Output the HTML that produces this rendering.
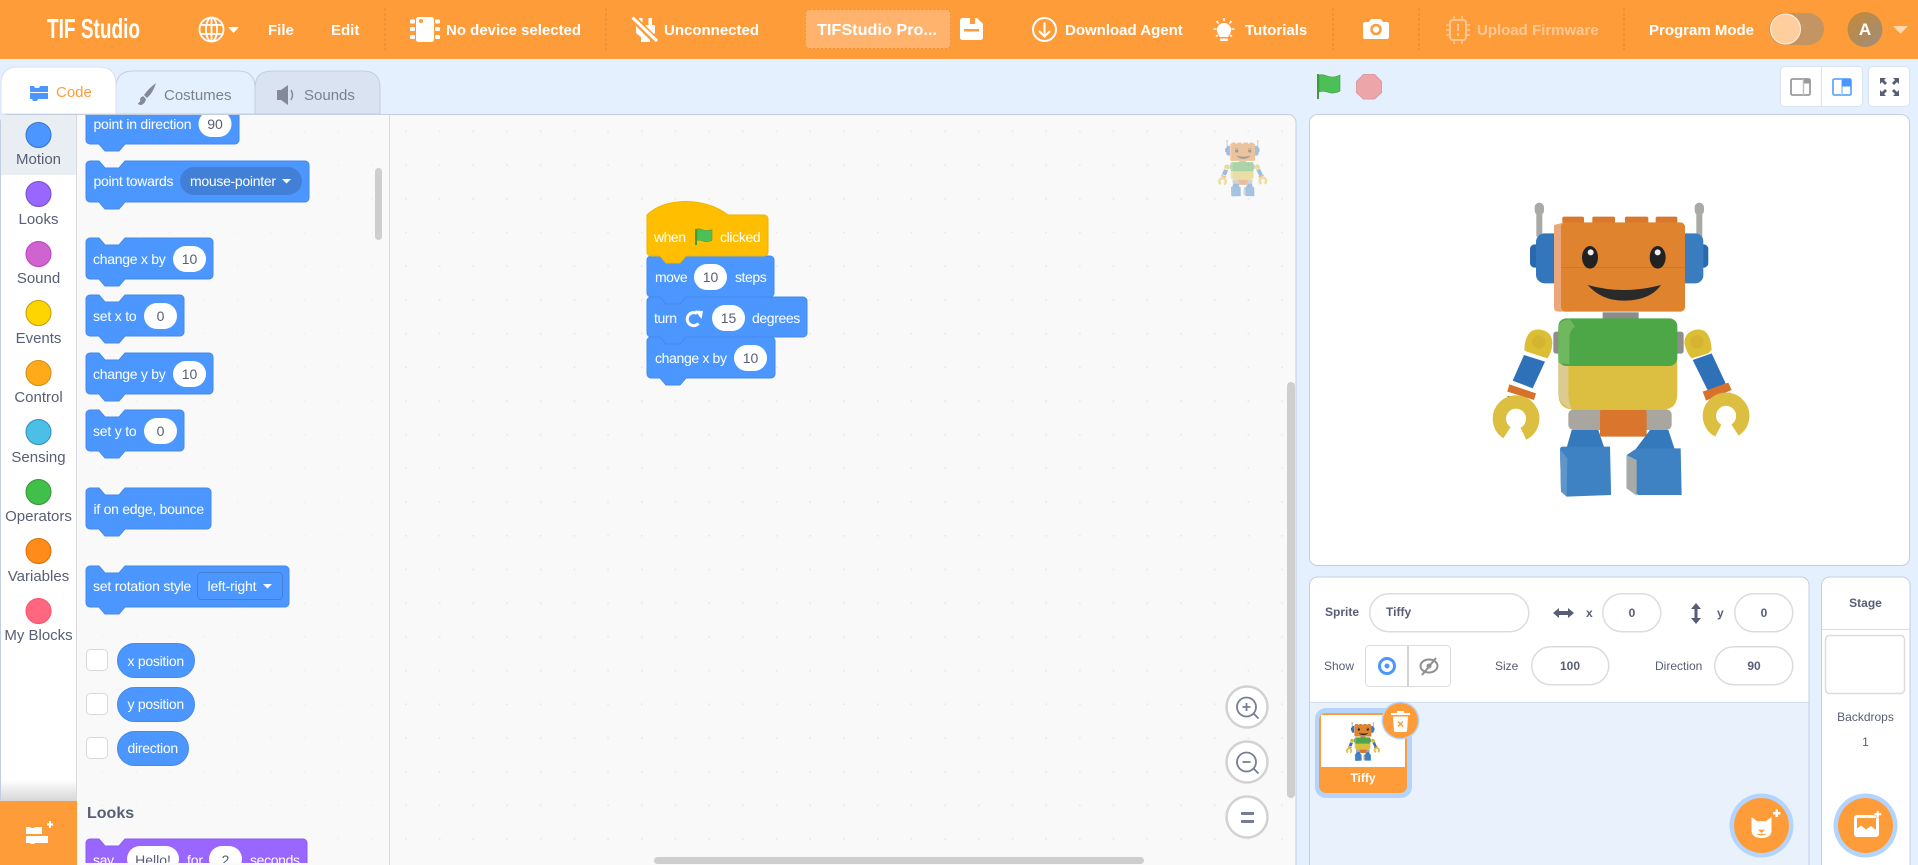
<!DOCTYPE html>
<html lang="en"><head><meta charset="utf-8"><title>TIF Studio</title>
<style>
html,body{margin:0;padding:0;width:1918px;height:865px;overflow:hidden;background:#e5f0ff}
svg{display:block;font-family:"Liberation Sans",Arial,sans-serif}
.h{font-size:15px;font-weight:700;fill:#fff}
.c{font-size:15px;fill:#575e75;text-anchor:middle}
.b{font-size:14px;fill:#fff}
.i{font-size:14px;fill:#575e75;text-anchor:middle}
.l{font-size:12px;fill:#575e75}
.lb{font-size:12px;fill:#575e75;font-weight:700}
.s{stroke:#4589ea;stroke-width:1;fill:#4c97ff}
.f{fill:none;stroke:#dcdcdc;stroke-width:1.5}
</style></head><body>
<svg width="1918" height="865" viewBox="0 0 1918 865" xmlns="http://www.w3.org/2000/svg">
<defs>
<pattern id="dots" patternUnits="userSpaceOnUse" x="641" y="198" width="33.7" height="33.7"><rect x="0" y="0" width="1.6" height="1.6" fill="#e6e6e6"/></pattern>
<clipPath id="fly"><rect x="77" y="115" width="312" height="748"/></clipPath>
<linearGradient id="fade" x1="0" y1="0" x2="0" y2="1"><stop offset="0" stop-color="#fff"/><stop offset="1" stop-color="#d6d6d6"/></linearGradient>
<linearGradient id="av" x1="0" y1="0" x2="1" y2="1"><stop offset="0" stop-color="#c58a35"/><stop offset="1" stop-color="#a08c7c"/></linearGradient>
<g id="robot">
<g fill="#a9a9a5"><rect x="229" y="90" width="18" height="80"/><rect x="709" y="90" width="18" height="80"/><rect x="224" y="68" width="28" height="38" rx="14"/><rect x="704" y="68" width="28" height="38" rx="14"/></g>
<rect x="210" y="193" width="40" height="70" rx="14" fill="#2a69ad"/>
<rect x="228" y="160" width="80" height="150" rx="26" fill="#3476bb"/>
<rect x="705" y="193" width="40" height="70" rx="14" fill="#2a69ad"/>
<rect x="650" y="160" width="80" height="150" rx="24" fill="#3a7cc0"/>
<g fill="#d9772c"><rect x="307" y="110" width="65" height="24" rx="5"/><rect x="397" y="110" width="68" height="24" rx="5"/><rect x="495" y="110" width="70" height="24" rx="5"/><rect x="587" y="110" width="65" height="24" rx="5"/></g>
<path d="M282,135 L310,128 H330 V395 H296 Q282,395 282,382Z" fill="#eaa77c"/>
<rect x="303" y="127" width="372" height="268" rx="14" fill="#e0832f"/>
<rect x="303" y="262" width="372" height="2" fill="#c97226"/>
<ellipse cx="390" cy="232" rx="24" ry="34" fill="#222"/><ellipse cx="593" cy="232" rx="24" ry="34" fill="#222"/>
<circle cx="392" cy="217" r="9" fill="#eee"/><circle cx="593" cy="217" r="9" fill="#eee"/>
<path d="M383,315 Q490,345 603,315 Q570,362 490,362 Q425,362 383,315Z" fill="#2a2a2a"/>
<rect x="428" y="397" width="108" height="30" fill="#8c8c8a"/>
<g fill="#8e8e8a"><rect x="280" y="455" width="38" height="66" rx="8"/><rect x="645" y="455" width="26" height="66" rx="8"/></g>
<rect x="325" y="688" width="310" height="62" rx="16" fill="#a8a69f"/>
<rect x="420" y="690" width="140" height="80" rx="6" fill="#d9752c"/>
<path d="M295,545 V640 Q295,688 340,688 H610 Q652,688 652,640 V545Z" fill="#dcbe40"/>
<path d="M295,550 V640 Q295,670 335,688 Q325,660 325,640 V550Z" fill="#dccb90"/>
<rect x="295" y="415" width="357" height="143" rx="24" fill="#4ea747"/>
<path d="M295,445 Q295,420 330,418 L345,440 Q328,452 328,475 V553 L295,548Z" fill="#6fb860"/>
<path d="M192,525 L255,545 L218,625 L158,602Z" fill="#2f71b8"/>
<path d="M755,520 L698,540 L745,635 L797,610Z" fill="#2f71b8"/>
<path d="M193,510 Q195,448 235,448 Q277,452 277,490 Q275,520 262,535 L200,515Z" fill="#dcbe35"/>
<path d="M755,510 Q752,448 715,448 Q673,452 673,490 Q680,520 695,535 L745,520Z" fill="#dcbe35"/>
<circle cx="236" cy="486" r="20" fill="#d4b430"/><circle cx="711" cy="486" r="20" fill="#d4b430"/>
<path d="M148,613 L228,640 L222,660 L142,635Z" fill="#d6722b"/><path d="M728,635 L805,608 L815,630 L738,662Z" fill="#d6722b"/>
<path d="M143,650 L210,672" stroke="#222" stroke-width="5"/><path d="M745,667 L810,640" stroke="#222" stroke-width="5"/>
<path d="M141,758 A50,50 0 1 1 190,761" fill="none" stroke="#dcbe40" stroke-width="40"/>
<path d="M775,752 A50,50 0 1 1 825,750" fill="none" stroke="#dcbe40" stroke-width="40"/>
<path d="M335,750 L415,750 L435,810 H318Z" fill="#3479bb"/><path d="M570,750 L625,750 L645,810 H525Z" fill="#3479bb"/>
<path d="M300,808 Q300,800 310,800 H450 L453,930 V945 L320,950 L303,935Z" fill="#3e82c4"/>
<path d="M300,808 L322,835 L320,950 L303,935Z" fill="#5f95c8"/>
<path d="M500,825 L530,805 H662 L665,945 H535 L500,925Z" fill="#3e82c4"/>
<path d="M500,825 L530,840 V947 L500,925Z" fill="#a9aaa8"/>
</g>
</defs>

<rect width="1918" height="865" fill="#e5f0ff"/>

<!-- header -->
<rect width="1918" height="59" fill="#ff9c3a"/>
<text x="47" y="38" font-size="28" font-weight="700" fill="#fff" textLength="93" lengthAdjust="spacingAndGlyphs">TIF Studio</text>
<g fill="none" stroke="#fff" stroke-width="1.8"><circle cx="211.5" cy="29.5" r="12"/><ellipse cx="211.5" cy="29.5" rx="5.5" ry="12"/><path d="M200,25H223M200,34H223M211.5,18V42"/></g>
<path d="M228,27h11l-5.5,6z" fill="#fff"/>
<text class="h" x="268" y="35">File</text>
<text class="h" x="331" y="35">Edit</text>
<g stroke="#d98936" stroke-width="1" stroke-dasharray="3 2"><path d="M385,8V50M606,8V50M1333,8V50M1419,8V50M1624,8V50"/></g>
<g fill="#fff"><rect x="416" y="17" width="18" height="25" rx="2.5"/><rect x="410" y="19.500" width="5" height="4" rx="1"/><rect x="410" y="27" width="5" height="4" rx="1"/><rect x="410" y="35" width="5" height="4" rx="1"/><rect x="435" y="19.500" width="5" height="4" rx="1"/><rect x="435" y="27" width="5" height="4" rx="1"/><rect x="435" y="35" width="5" height="4" rx="1"/></g>
<circle cx="421" cy="21" r="2" fill="#ff9c3a"/>
<text class="h" x="446" y="35">No device selected</text>
<path d="M639,18h3.500v7h6v-7h3.500v7h3v8l-5,4v5h-9v-5l-5,-4v-8h3z" fill="#fff"/>
<path d="M633,18L657,42" stroke="#ff9c3a" stroke-width="7"/><path d="M632.500,17.500L657,41" stroke="#fff" stroke-width="3"/>
<text class="h" x="664" y="35">Unconnected</text>
<rect x="805.500" y="9.500" width="145" height="39" rx="4" fill="#ffb36d" stroke="#e8923f" stroke-dasharray="2 2"/>
<text class="h" x="817" y="35" textLength="120" lengthAdjust="spacingAndGlyphs" style="font-size:16px">TIFStudio Pro...</text>
<path d="M960,20.500a2.500,2.500 0 0 1 2.500,-2.500H977l6,6v13.500a2.500,2.500 0 0 1 -2.500,2.500H962.500a2.500,2.500 0 0 1 -2.500,-2.500Z" fill="#fff"/>
<rect x="964" y="29" width="15" height="2.500" fill="#ff9c3a"/><rect x="970" y="18" width="5" height="6" fill="#ff9c3a"/>
<circle cx="1044.500" cy="29.500" r="11.500" fill="none" stroke="#fff" stroke-width="2"/><path d="M1044.500,22.500V36M1039,31l5.500,5.500 5.500,-5.500" fill="none" stroke="#fff" stroke-width="2"/>
<text class="h" x="1065" y="35">Download Agent</text>
<path d="M1224,23a7,7 0 0 1 4.500,12.500V37h-9v-1.500A7,7 0 0 1 1224,23Z" fill="#fff"/><rect x="1220" y="38.500" width="8" height="2.500" rx="1" fill="#fff"/>
<path d="M1224,18v3M1216.500,21l2,2.500M1231.500,21l-2,2.500M1213.500,29h3M1231.500,29h3M1216,36.500l2,-1.500M1232,36.500l-2,-1.500" stroke="#fff" stroke-width="1.500"/>
<text class="h" x="1245" y="35">Tutorials</text>
<path d="M1363,24a2,2 0 0 1 2,-2h4l2,-3h10l2,3h4a2,2 0 0 1 2,2v13a2,2 0 0 1 -2,2h-22a2,2 0 0 1 -2,-2Z" fill="#fff"/>
<circle cx="1376" cy="29.500" r="4.500" fill="none" stroke="#ff9c3a" stroke-width="2.500"/>
<g opacity=".45" stroke="#fff" fill="none"><rect x="1450" y="20" width="16" height="20" rx="3" stroke-width="2"/><path d="M1446,25h4M1446,30h4M1446,35h4M1466,25h4M1466,30h4M1466,35h4M1454,16v4M1462,16v4M1454,40v4M1462,40v4" stroke-width="1.500"/><path d="M1458,24v7M1458,33v3" stroke-width="2"/></g>
<text class="h" x="1477" y="35" opacity=".45">Upload Firmware</text>
<text class="h" x="1649" y="35">Program Mode</text>
<rect x="1769" y="13" width="55" height="32" rx="16" fill="#c49462"/>
<circle cx="1785.500" cy="29" r="15" fill="#fecf9d" stroke="#fff0e0" stroke-width="1"/>
<circle cx="1865" cy="29.500" r="17.500" fill="url(#av)"/>
<text x="1865" y="35" font-size="17" font-weight="700" fill="#fff" text-anchor="middle">A</text>
<path d="M1893,26h15l-7.500,8z" fill="#ffd9b0"/>

<!-- tabs -->
<path d="M240,114H380V88Q380,71 363,71H272Q255,71 255,88V114Z" fill="#d9e3f2" stroke="#c3cfe0"/>
<path d="M116,114V88Q116,71 133,71H238Q255,71 255,88V114Z" fill="#e5f0ff" stroke="#c3cfe0"/>
<path d="M1,114V84Q1,67 18,67H99Q116,67 116,84V114Z" fill="#fff" stroke="#d6e1f0"/>
<g fill="#4c97ff"><path d="M30,86h4l1,2h4l1,-2h8v6h-18zM30,93h18v6h-10l-1,2h-4l-1,-2h-2z"/></g>
<text x="56" y="97" font-size="15" fill="#ff9c3a">Code</text>
<path d="M156,83q-3,10 -9,15l-3,-3q5,-7 12,-12zM143,96l3,3q-1,5 -5,6q-3,0 -3,-2q3,-1 2,-4q1,-2 3,-3z" fill="#848a9a"/>
<text x="164" y="100" font-size="15" fill="#7b8193">Costumes</text>
<path d="M277,90h4l7,-5v20l-7,-5h-4z" fill="#848a9a"/><path d="M291,90q3,5 0,10" stroke="#848a9a" stroke-width="1.500" fill="none"/>
<text x="304" y="100" font-size="15" fill="#7b8193">Sounds</text>

<!-- code area -->
<rect x="0.500" y="114.500" width="1295.500" height="760" rx="8" fill="#f9f9f9" stroke="#c3cfe0"/>
<rect x="1" y="115" width="75" height="750" fill="#fff"/>
<rect x="1" y="115" width="75" height="60" fill="#e9eef2"/>
<path d="M76.500,115V865" stroke="#d9d9d9"/>
<rect x="78" y="115" width="311" height="750" fill="url(#dots)" opacity=".5"/>
<path d="M389.500,115V865" stroke="#d9d9d9"/>
<rect x="391" y="115" width="904" height="750" fill="url(#dots)"/>

<!-- categories -->
<g stroke-width="1">
<circle cx="38.500" cy="135" r="12.500" fill="#4c97ff" stroke="#3373cc"/>
<circle cx="38.500" cy="194" r="12.500" fill="#9966ff" stroke="#774dcb"/>
<circle cx="38.500" cy="254" r="12.500" fill="#cf63cf" stroke="#bd42bd"/>
<circle cx="38.500" cy="313" r="12.500" fill="#ffd500" stroke="#cc9900"/>
<circle cx="38.500" cy="373" r="12.500" fill="#ffab19" stroke="#cf8b17"/>
<circle cx="38.500" cy="432" r="12.500" fill="#4cbfe6" stroke="#2e8eb8"/>
<circle cx="38.500" cy="492" r="12.500" fill="#40bf4a" stroke="#389438"/>
<circle cx="38.500" cy="551" r="12.500" fill="#ff8c1a" stroke="#db6e00"/>
<circle cx="38.500" cy="611" r="12.500" fill="#ff6680" stroke="#ff4d6a"/>
</g>
<text class="c" x="38.500" y="164">Motion</text>
<text class="c" x="38.500" y="224">Looks</text>
<text class="c" x="38.500" y="283">Sound</text>
<text class="c" x="38.500" y="343">Events</text>
<text class="c" x="38.500" y="402">Control</text>
<text class="c" x="38.500" y="462">Sensing</text>
<text class="c" x="38.500" y="521">Operators</text>
<text class="c" x="38.500" y="581">Variables</text>
<text class="c" x="38.500" y="640">My Blocks</text>
<rect x="1" y="780" width="75" height="21" fill="url(#fade)"/>
<rect x="0" y="801" width="77" height="64" fill="#ff9c3a"/>
<g fill="#fff"><path d="M26,827h4l1,1h3l1,-1h7v7h-16zM26,836h22v7h-13l-1,1h-3l-1,-1h-4z"/><path d="M47,823.500h2v-2.500h2v2.500h2v2h-2v2.500h-2v-2.500h-2z"/></g>

<!-- flyout blocks -->
<g clip-path="url(#fly)">
<g transform="translate(86 103)"><path class="s" d="M0,4a4,4 0 0 1 4,-4H13l6,7h14l6,-7H149a4,4 0 0 1 4,4V37a4,4 0 0 1 -4,4H39l-6,7h-14l-6,-7H4a4,4 0 0 1 -4,-4Z"/><text class="b" x="7.500" y="26" textLength="98">point in direction</text><rect x="112.500" y="8" width="33" height="26" rx="13" fill="#fff"/><text class="i" x="129" y="26">90</text></g>
<g transform="translate(86 161)"><path class="s" d="M0,4a4,4 0 0 1 4,-4H13l6,7h14l6,-7H219a4,4 0 0 1 4,4V37a4,4 0 0 1 -4,4H39l-6,7h-14l-6,-7H4a4,4 0 0 1 -4,-4Z"/><text class="b" x="7.500" y="25" textLength="80">point towards</text><rect x="94" y="6" width="122" height="28" rx="14" fill="#4280d7"/><text class="b" x="104" y="25" textLength="86">mouse-pointer</text><path d="M196,18h9l-4.500,4.500z" fill="#fff"/></g>
<g transform="translate(86 238)"><path class="s" d="M0,4a4,4 0 0 1 4,-4H13l6,7h14l6,-7H123a4,4 0 0 1 4,4V37a4,4 0 0 1 -4,4H39l-6,7h-14l-6,-7H4a4,4 0 0 1 -4,-4Z"/><text class="b" x="7" y="26" textLength="72.700">change x by</text><rect x="87" y="8" width="33" height="26" rx="13" fill="#fff"/><text class="i" x="103.500" y="26">10</text></g>
<g transform="translate(86 295)"><path class="s" d="M0,4a4,4 0 0 1 4,-4H13l6,7h14l6,-7H94a4,4 0 0 1 4,4V37a4,4 0 0 1 -4,4H39l-6,7h-14l-6,-7H4a4,4 0 0 1 -4,-4Z"/><text class="b" x="7" y="26" textLength="43.700">set x to</text><rect x="58" y="8" width="33" height="26" rx="13" fill="#fff"/><text class="i" x="74.500" y="26">0</text></g>
<g transform="translate(86 353)"><path class="s" d="M0,4a4,4 0 0 1 4,-4H13l6,7h14l6,-7H123a4,4 0 0 1 4,4V37a4,4 0 0 1 -4,4H39l-6,7h-14l-6,-7H4a4,4 0 0 1 -4,-4Z"/><text class="b" x="7" y="26" textLength="72.700">change y by</text><rect x="87" y="8" width="33" height="26" rx="13" fill="#fff"/><text class="i" x="103.500" y="26">10</text></g>
<g transform="translate(86 410)"><path class="s" d="M0,4a4,4 0 0 1 4,-4H13l6,7h14l6,-7H94a4,4 0 0 1 4,4V37a4,4 0 0 1 -4,4H39l-6,7h-14l-6,-7H4a4,4 0 0 1 -4,-4Z"/><text class="b" x="7" y="26" textLength="43.700">set y to</text><rect x="58" y="8" width="33" height="26" rx="13" fill="#fff"/><text class="i" x="74.500" y="26">0</text></g>
<g transform="translate(86 488)"><path class="s" d="M0,4a4,4 0 0 1 4,-4H13l6,7h14l6,-7H121a4,4 0 0 1 4,4V37a4,4 0 0 1 -4,4H39l-6,7h-14l-6,-7H4a4,4 0 0 1 -4,-4Z"/><text class="b" x="7.500" y="26" textLength="110.700">if on edge, bounce</text></g>
<g transform="translate(86 566)"><path class="s" d="M0,4a4,4 0 0 1 4,-4H13l6,7h14l6,-7H199a4,4 0 0 1 4,4V37a4,4 0 0 1 -4,4H39l-6,7h-14l-6,-7H4a4,4 0 0 1 -4,-4Z"/><text class="b" x="7" y="25" textLength="98.300">set rotation style</text><rect x="111.500" y="6.500" width="85" height="27" rx="4" fill="#4c97ff" stroke="#4280d7"/><text class="b" x="121.500" y="25" textLength="49">left-right</text><path d="M177,18h9l-4.500,4.500z" fill="#fff"/></g>
<rect x="86.500" y="649.500" width="21" height="21" rx="4" fill="#fff" stroke="#d9d9d9"/>
<rect x="86.500" y="693.500" width="21" height="21" rx="4" fill="#fff" stroke="#d9d9d9"/>
<rect x="86.500" y="737.500" width="21" height="21" rx="4" fill="#fff" stroke="#d9d9d9"/>
<rect x="117.500" y="643.500" width="77" height="34" rx="17" class="s"/><text class="b" x="127.500" y="666" textLength="56.700">x position</text>
<rect x="117.500" y="687.500" width="77" height="34" rx="17" class="s"/><text class="b" x="127.500" y="709" textLength="56.700">y position</text>
<rect x="117.500" y="731.500" width="71" height="34" rx="17" class="s"/><text class="b" x="127.500" y="753" textLength="50.700">direction</text>
<text x="87" y="818" font-size="16" font-weight="700" fill="#575e75">Looks</text>
<g transform="translate(86 839)"><path d="M0,4a4,4 0 0 1 4,-4H13l6,7h14l6,-7H217a4,4 0 0 1 4,4V37a4,4 0 0 1 -4,4H4a4,4 0 0 1 -4,-4Z" fill="#9966ff" stroke="#8a5cf0"/><text class="b" x="7" y="26" textLength="21">say</text><rect x="41" y="7" width="52" height="26" rx="13" fill="#fff"/><text class="i" x="67" y="26">Hello!</text><text class="b" x="101" y="26" textLength="16">for</text><rect x="123" y="7" width="33" height="26" rx="13" fill="#fff"/><text class="i" x="139.500" y="26">2</text><text class="b" x="164" y="26" textLength="50">seconds</text></g>
</g>
<rect x="375" y="168" width="7" height="72" rx="3.500" fill="#cecece"/>

<!-- workspace script -->
<g transform="translate(647 337)"><path class="s" d="M0,4a4,4 0 0 1 4,-4H13l6,7h14l6,-7H124a4,4 0 0 1 4,4V37a4,4 0 0 1 -4,4H39l-6,7h-14l-6,-7H4a4,4 0 0 1 -4,-4Z"/><text class="b" x="8" y="26" textLength="72">change x by</text><rect x="87" y="8" width="33" height="26" rx="13" fill="#fff"/><text class="i" x="103.500" y="26">10</text></g>
<g transform="translate(647 297)"><path class="s" d="M0,4a4,4 0 0 1 4,-4H13l6,7h14l6,-7H156a4,4 0 0 1 4,4V36a4,4 0 0 1 -4,4H39l-6,7h-14l-6,-7H4a4,4 0 0 1 -4,-4Z"/><text class="b" x="7" y="26" textLength="23">turn</text><rect x="65" y="8" width="33" height="26" rx="13" fill="#fff"/><text class="i" x="81.500" y="26">15</text><text class="b" x="105" y="26" textLength="48.300">degrees</text></g>
<path d="M698.500,323.500A6.500,6.500 0 1 1 697,313.500" fill="none" stroke="#fff" stroke-width="3"/><path d="M695,310.500l8,.5 -1.500,8z" fill="#fff"/>
<g transform="translate(647 256)"><path class="s" d="M0,4a4,4 0 0 1 4,-4H13l6,7h14l6,-7H123a4,4 0 0 1 4,4V37a4,4 0 0 1 -4,4H39l-6,7h-14l-6,-7H4a4,4 0 0 1 -4,-4Z"/><text class="b" x="8" y="26" textLength="32.700">move</text><rect x="47" y="8" width="33" height="26" rx="13" fill="#fff"/><text class="i" x="63.500" y="26">10</text><text class="b" x="88" y="26" textLength="31.700">steps</text></g>
<path d="M647,215C665,197 705,197 728,215H764a4,4 0 0 1 4,4V252a4,4 0 0 1 -4,4H686l-6,7h-14l-6,-7H651a4,4 0 0 1 -4,-4Z" fill="#ffbf00" stroke="#f0b400"/>
<text class="b" x="654" y="242" textLength="32">when</text>
<path d="M696,229v16" stroke="#45993d" stroke-width="2"/><path d="M697,229c4,-1 7,2 10,1.500c2,0 4,-.5 5,-1v11c-3,1 -5,1.500 -7.500,1c-3,-1 -5,-2 -7.500,-1z" fill="#4cbf56" stroke="#45993d" stroke-width=".5"/>
<text class="b" x="720" y="242" textLength="40.700">clicked</text>

<!-- ghost robot -->
<use href="#robot" transform="translate(1211.800 135.600) scale(.064)" opacity=".45"/>

<!-- scrollbars -->
<rect x="1287" y="382" width="8" height="416" rx="4" fill="#cecece"/>
<rect x="654" y="857" width="490" height="7" rx="3.500" fill="#cecece"/>

<!-- zoom controls -->
<g fill="#fff" stroke="#d2d2d2" stroke-width="2.500"><circle cx="1247" cy="707" r="20.500"/><circle cx="1247" cy="762" r="20.500"/><circle cx="1247" cy="817" r="20.500"/></g>
<g fill="none" stroke="#757c95" stroke-width="1.800"><circle cx="1246.500" cy="707" r="9.500"/><path d="M1253.500,713.500l5,5M1246.500,703v8M1242.500,707h8"/><circle cx="1246.500" cy="762" r="9.500"/><path d="M1253.500,768.500l5,5M1242.500,762h8"/></g>
<g fill="#757c95"><rect x="1241" y="812" width="13" height="3" rx=".5"/><rect x="1241" y="820" width="13" height="3" rx=".5"/></g>

<!-- stage header controls -->
<path d="M1318,74v25" stroke="#45993d" stroke-width="2"/><path d="M1319,75c5,-1.500 8,2 13,2c3,0 6,-1 8,-2v16c-3,1.500 -6,2.500 -9,2c-4,-1 -8,-2.500 -12,-1z" fill="#4cbf56" stroke="#45993d" stroke-width=".6"/>
<path d="M1363.500,74.500h11l7,7v11l-7,6.500h-11l-7,-6.500v-11z" fill="#eca5a9" stroke="#db9ba0"/>
<rect x="1780.500" y="66.500" width="82" height="40" rx="4" fill="#fff" stroke="#d9e3f2"/>
<path d="M1821.500,66.500v40" stroke="#d9e3f2"/>
<rect x="1791" y="79" width="19" height="16" rx="1.500" fill="#fff" stroke="#9a9a9a" stroke-width="1.800"/><path d="M1803.500,79v16" stroke="#c0c0c0" stroke-width="1.500"/><rect x="1804" y="79" width="5.500" height="4.500" fill="#9a9a9a"/>
<rect x="1833" y="79" width="18" height="16" rx="1.500" fill="#fff" stroke="#66a6ff" stroke-width="1.800"/><path d="M1842,79v16" stroke="#99c4ff" stroke-width="1.500"/><rect x="1842" y="79" width="9" height="7.500" fill="#4c97ff"/>
<rect x="1868.500" y="66.500" width="41" height="40" rx="4" fill="#fff" stroke="#d9e3f2"/>
<g fill="#575e75"><path d="M1880,78h6l-2,2 3,3 -2,2 -3,-3 -2,2zM1899,78h-6l2,2 -3,3 2,2 3,-3 2,2zM1880,96h6l-2,-2 3,-3 -2,-2 -3,3 -2,-2zM1899,96h-6l2,-2 -3,-3 2,-2 3,3 2,-2z"/></g>

<!-- stage -->
<rect x="1309.500" y="114.500" width="600" height="451" rx="8" fill="#fff" stroke="#c3cfe0"/>
<use href="#robot" transform="translate(1460 180) scale(.33333)"/>

<!-- sprite panel -->
<path d="M1309.500,870V585a8,8 0 0 1 8,-8H1801a8,8 0 0 1 8,8V870Z" fill="#fff" stroke="#c3cfe0"/>
<path d="M1310,702H1808.500V870H1310Z" fill="#e9f1fc"/>
<path d="M1310,702.500H1808.500" stroke="#d5deea"/>
<text class="lb" x="1325" y="616">Sprite</text>
<rect class="f" x="1369.750" y="593.750" width="159" height="38" rx="19"/>
<text class="lb" x="1386" y="616">Tiffy</text>
<path d="M1553,613l6,-5v3h9v-3l6,5 -6,5v-3h-9v3z" fill="#575e75"/>
<text class="lb" x="1586" y="617">x</text>
<rect class="f" x="1602.750" y="593.750" width="58" height="38" rx="19"/>
<text class="lb" x="1632" y="617" text-anchor="middle">0</text>
<path d="M1696,603l5,6h-3.500v9h3.500l-5,6 -5,-6h3.500v-9h-3.500z" fill="#575e75"/>
<text class="lb" x="1717" y="617">y</text>
<rect class="f" x="1734.750" y="593.750" width="58" height="38" rx="19"/>
<text class="lb" x="1764" y="617" text-anchor="middle">0</text>
<text class="l" x="1324" y="670">Show</text>
<rect x="1365.500" y="645.500" width="85" height="41" rx="4" fill="#fff" stroke="#dcdcdc"/>
<path d="M1408,646v41" stroke="#d4d4d4" stroke-width="2"/>
<circle cx="1387" cy="666" r="7.500" fill="none" stroke="#4c97ff" stroke-width="3"/><circle cx="1387" cy="666" r="2.500" fill="#4c97ff"/>
<ellipse cx="1429" cy="666" rx="8.500" ry="6.500" fill="none" stroke="#8f8f8f" stroke-width="2"/><circle cx="1429" cy="666" r="2.500" fill="#8f8f8f"/><path d="M1422,675l14,-17" stroke="#8f8f8f" stroke-width="2"/>
<text class="l" x="1495" y="670">Size</text>
<rect class="f" x="1531.750" y="646.750" width="77" height="38" rx="19"/>
<text class="lb" x="1570" y="670" text-anchor="middle">100</text>
<text class="l" x="1655" y="670">Direction</text>
<rect class="f" x="1714.750" y="646.750" width="78" height="38" rx="19"/>
<text class="lb" x="1754" y="670" text-anchor="middle">90</text>

<!-- sprite tile -->
<rect x="1315" y="708" width="97" height="90" rx="11" fill="#b3d4ff"/>
<rect x="1319" y="713" width="88" height="80" rx="7" fill="#ff9c3a"/>
<rect x="1321" y="715" width="84" height="52" fill="#fff"/>
<text x="1363" y="782" font-size="12" font-weight="700" fill="#fff" text-anchor="middle">Tiffy</text>
<use href="#robot" transform="translate(1341.700 719.100) scale(.044)"/>
<circle cx="1400.500" cy="720.500" r="19" fill="#b3d4ff"/><circle cx="1400.500" cy="720.500" r="17.500" fill="#ff9c3a"/>
<path d="M1391,713h19v2h-19zM1397,711h7v2h-7zM1393,716.500h15l-1,14.500a1.500,1.500 0 0 1 -1.500,1h-10a1.500,1.500 0 0 1 -1.500,-1z" fill="#fff"/>
<path d="M1398,721.500l5,5M1403,721.500l-5,5" stroke="#ff9c3a" stroke-width="1.500"/>

<!-- add sprite -->
<circle cx="1761.500" cy="825.500" r="32" fill="#b3d4ff"/><circle cx="1761.500" cy="825.500" r="27.500" fill="#ff9c3a"/>
<path d="M1751.500,817l6,4.500q4,-1 8,0l6,-4.500v13q0,8 -10,8q-10,0 -10,-8z" fill="#fff"/>
<path d="M1759,830h5l-2.500,2.500zM1757,834q4.500,2 9,0" fill="#ff9c3a" stroke="#ff9c3a" stroke-width=".8"/>
<path d="M1773,812h2.500v-2.500h2.500v2.500h2.500v2.500h-2.500v2.500h-2.500v-2.500h-2.500z" fill="#fff"/>

<!-- stage panel -->
<path d="M1821.500,870V585a8,8 0 0 1 8,-8H1902a8,8 0 0 1 8,8V870Z" fill="#fff" stroke="#c3cfe0"/>
<path d="M1822,629.500H1909" stroke="#dcdcdc"/>
<text class="lb" x="1865.500" y="607" text-anchor="middle">Stage</text>
<rect x="1825.500" y="635.500" width="79" height="58" rx="4" fill="#fff" stroke="#dcdcdc" stroke-width="1.500"/>
<text class="l" x="1865.500" y="721" text-anchor="middle">Backdrops</text>
<text class="l" x="1865.500" y="746" text-anchor="middle">1</text>
<circle cx="1865.500" cy="825.500" r="32" fill="#b3d4ff"/><circle cx="1865.500" cy="825.500" r="27.500" fill="#ff9c3a"/>
<rect x="1854" y="815" width="25" height="22" rx="3" fill="#fff"/>
<path d="M1857,818h19v12l-5,-4 -5,3.500 -5,-4 -4,3z" fill="#ff9c3a"/>
<path d="M1874,813h2.500v-2.500h2.500v2.500h2.500v2.500h-2.500v2.500h-2.500v-2.500h-2.500z" fill="#fff" stroke="#ff9c3a" stroke-width=".5"/>
</svg>
</body></html>
